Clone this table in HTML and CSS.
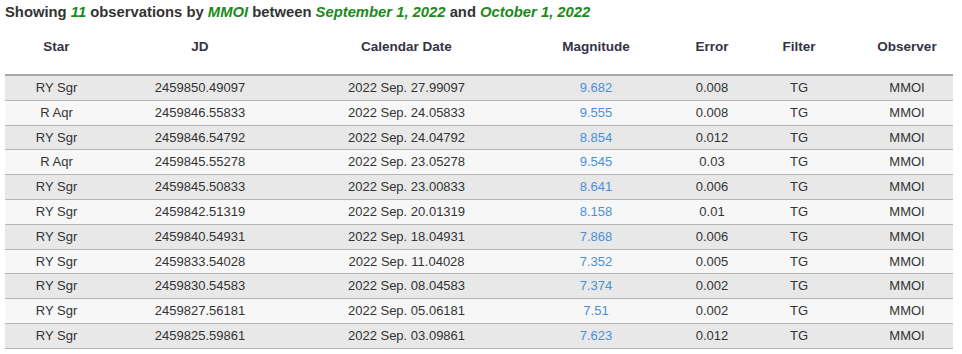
FILE: index.html
```html
<!DOCTYPE html>
<html>
<head>
<meta charset="utf-8">
<link rel="stylesheet" href="styles.css">
</head>
<body>
<p class="summary">Showing <em>11</em> observations by <em>MMOI</em> between <em>September 1, 2022</em> and <em>October 1, 2022</em></p>
<table class="obs">
<colgroup>
<col class="c-star"><col class="c-jd"><col class="c-date"><col class="c-mag"><col class="c-err"><col class="c-filter"><col class="c-obs">
</colgroup>
<thead>
<tr><th class="p1">Star</th><th class="p2">JD</th><th class="p3">Calendar Date</th><th class="p4">Magnitude</th><th class="p5">Error</th><th class="p6">Filter</th><th class="p7">Observer</th></tr>
</thead>
<tbody>
<tr><td class="p1">RY Sgr</td><td class="p2">2459850.49097</td><td class="p3">2022 Sep. 27.99097</td><td class="p4"><a href="#">9.682</a></td><td class="p5">0.008</td><td class="p6">TG</td><td class="p7">MMOI</td></tr>
<tr><td class="p1">R Aqr</td><td class="p2">2459846.55833</td><td class="p3">2022 Sep. 24.05833</td><td class="p4"><a href="#">9.555</a></td><td class="p5">0.008</td><td class="p6">TG</td><td class="p7">MMOI</td></tr>
<tr><td class="p1">RY Sgr</td><td class="p2">2459846.54792</td><td class="p3">2022 Sep. 24.04792</td><td class="p4"><a href="#">8.854</a></td><td class="p5">0.012</td><td class="p6">TG</td><td class="p7">MMOI</td></tr>
<tr><td class="p1">R Aqr</td><td class="p2">2459845.55278</td><td class="p3">2022 Sep. 23.05278</td><td class="p4"><a href="#">9.545</a></td><td class="p5">0.03</td><td class="p6">TG</td><td class="p7">MMOI</td></tr>
<tr><td class="p1">RY Sgr</td><td class="p2">2459845.50833</td><td class="p3">2022 Sep. 23.00833</td><td class="p4"><a href="#">8.641</a></td><td class="p5">0.006</td><td class="p6">TG</td><td class="p7">MMOI</td></tr>
<tr><td class="p1">RY Sgr</td><td class="p2">2459842.51319</td><td class="p3">2022 Sep. 20.01319</td><td class="p4"><a href="#">8.158</a></td><td class="p5">0.01</td><td class="p6">TG</td><td class="p7">MMOI</td></tr>
<tr><td class="p1">RY Sgr</td><td class="p2">2459840.54931</td><td class="p3">2022 Sep. 18.04931</td><td class="p4"><a href="#">7.868</a></td><td class="p5">0.006</td><td class="p6">TG</td><td class="p7">MMOI</td></tr>
<tr><td class="p1">RY Sgr</td><td class="p2">2459833.54028</td><td class="p3">2022 Sep. 11.04028</td><td class="p4"><a href="#">7.352</a></td><td class="p5">0.005</td><td class="p6">TG</td><td class="p7">MMOI</td></tr>
<tr><td class="p1">RY Sgr</td><td class="p2">2459830.54583</td><td class="p3">2022 Sep. 08.04583</td><td class="p4"><a href="#">7.374</a></td><td class="p5">0.002</td><td class="p6">TG</td><td class="p7">MMOI</td></tr>
<tr><td class="p1">RY Sgr</td><td class="p2">2459827.56181</td><td class="p3">2022 Sep. 05.06181</td><td class="p4"><a href="#">7.51</a></td><td class="p5">0.002</td><td class="p6">TG</td><td class="p7">MMOI</td></tr>
<tr><td class="p1">RY Sgr</td><td class="p2">2459825.59861</td><td class="p3">2022 Sep. 03.09861</td><td class="p4"><a href="#">7.623</a></td><td class="p5">0.012</td><td class="p6">TG</td><td class="p7">MMOI</td></tr>
</tbody>
</table>
</body>
</html>
```

FILE: styles.css
```css
html, body {
  margin: 0;
  padding: 0;
  background: #ffffff;
}
body {
  padding: 0 5px;
  font-family: "Liberation Sans", Arial, sans-serif;
  color: #333333;
}
.summary {
  margin: 0;
  height: 26px;
  line-height: 24px;
  font-size: 14.8px;
  font-weight: bold;
  color: #333333;
}
.summary em {
  color: #1a8a1a;
  font-style: italic;
}
.obs {
  width: 948px;
  border-collapse: collapse;
  table-layout: fixed;
  font-size: 13px;
}
.c-star { width: 123px; }
.c-jd { width: 175px; }
.c-date { width: 198px; }
.c-mag { width: 153px; }
.c-err { width: 101px; }
.c-filter { width: 98px; }
.c-obs { width: 100px; }
.obs th {
  font-size: 13.5px;
  font-weight: bold;
  color: #333344;
  text-align: center;
  padding-top: 11px;
  padding-bottom: 17px;
  line-height: 20px;
  border-bottom: 2px solid #a9a9a9;
}
.obs td {
  text-align: center;
  line-height: 23.8px;
  padding-top: 0;
  padding-bottom: 0;
  border-bottom: 1px solid #b5b5b5;
  white-space: nowrap;
}
.obs tbody tr:nth-child(odd) { background: #e8e8e8; }
.obs tbody tr:nth-child(even) { background: #f7f7f7; }
.obs a {
  color: #4a90d9;
  text-decoration: none;
}
.p1 { padding-left: 0; padding-right: 20px; }
.p2 { padding-left: 0; padding-right: 31px; }
.p3 { padding-left: 9px; padding-right: 0; }
.p4 { padding-left: 37px; padding-right: 0; }
.p5 { padding-left: 15px; padding-right: 0; }
.p6 { padding-left: 0; padding-right: 10px; }
.p7 { padding-left: 8px; padding-right: 0; }
```
